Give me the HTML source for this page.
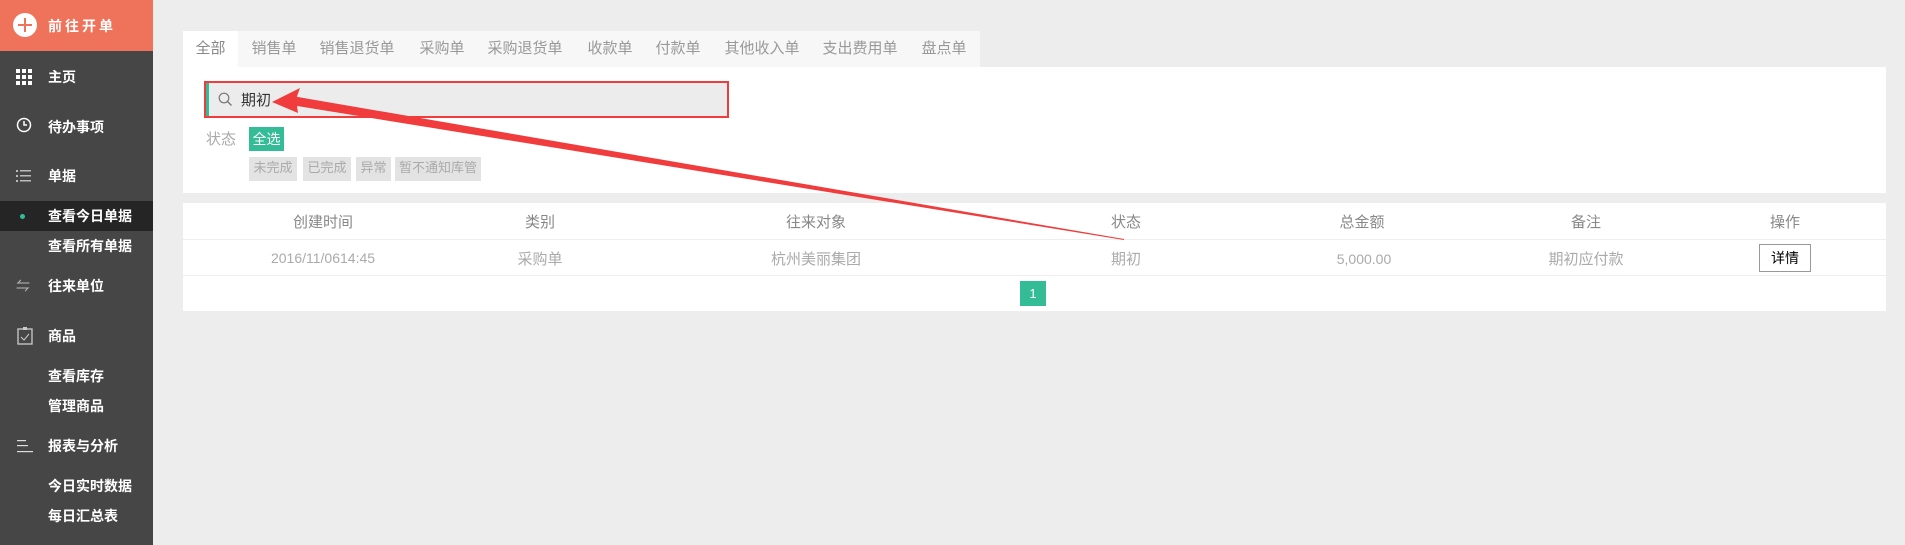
<!DOCTYPE html>
<html><head><meta charset="utf-8"><style>
*{margin:0;padding:0;box-sizing:border-box}
body{width:1905px;height:545px;background:#ededed;font-family:"Liberation Sans","Noto Sans CJK SC",sans-serif;position:relative;overflow:hidden}
.abs{position:absolute}
#side{left:0;top:0;width:153px;height:545px;background:#464646}
#top{left:0;top:0;width:153px;height:51px;background:#ef735a}
.si{position:absolute;color:#fff;font-weight:bold;font-size:14px;line-height:20px;left:48px}
.sub{left:48px}
.tab{position:absolute;top:31px;height:36px;line-height:36px;font-size:15px;color:#999;text-align:center}
.g{position:absolute;background:#e3e3e3;color:#aaa;font-size:13px;line-height:22px;text-align:center}
.th{position:absolute;top:211px;font-size:15px;color:#888;transform:translateX(-50%);white-space:nowrap}
.td{position:absolute;top:248px;font-size:15px;color:#aaa;transform:translateX(-50%);white-space:nowrap}
</style></head><body>
<div id="side" class="abs"></div>
<div id="top" class="abs"></div>
<div class="abs" style="left:13px;top:13px;width:24px;height:24px;border-radius:50%;background:#fff"></div>
<div class="abs" style="left:18px;top:24px;width:14px;height:2px;background:#ef735a"></div>
<div class="abs" style="left:24px;top:18px;width:2px;height:14px;background:#ef735a"></div>
<div class="si" style="top:16px;letter-spacing:3px">前往开单</div>
<svg class="abs" style="left:16px;top:69px" width="16" height="16"><g fill="#fff"><rect x="0" y="0" width="4" height="4"/><rect x="6" y="0" width="4" height="4"/><rect x="12" y="0" width="4" height="4"/><rect x="0" y="6" width="4" height="4"/><rect x="6" y="6" width="4" height="4"/><rect x="12" y="6" width="4" height="4"/><rect x="0" y="12" width="4" height="4"/><rect x="6" y="12" width="4" height="4"/><rect x="12" y="12" width="4" height="4"/></g></svg>
<div class="si" style="top:67px">主页</div>
<svg class="abs" style="left:16px;top:117px" width="16" height="16"><circle cx="8" cy="8" r="6.5" fill="none" stroke="#fff" stroke-width="1.5"/><path d="M8 4v4h3" fill="none" stroke="#fff" stroke-width="1.5"/></svg>
<div class="si" style="top:117px">待办事项</div>
<svg class="abs" style="left:16px;top:169px" width="16" height="14"><g fill="#bbb"><rect x="0" y="1" width="2" height="2"/><rect x="0" y="6" width="2" height="2"/><rect x="0" y="11" width="2" height="2"/><rect x="4" y="1" width="11" height="1.5"/><rect x="4" y="6" width="11" height="1.5"/><rect x="4" y="11" width="11" height="1.5"/></g></svg>
<div class="si" style="top:166px">单据</div>
<div class="abs" style="left:0;top:201px;width:153px;height:30px;background:#252525"></div>
<div class="abs" style="left:20px;top:214px;width:5px;height:5px;border-radius:50%;background:#2fbf98"></div>
<div class="si sub" style="top:206px">查看今日单据</div>
<div class="si sub" style="top:236px">查看所有单据</div>
<div class="si" style="top:276px;left:16px;color:#bbb;font-weight:normal">⇋</div>
<div class="si" style="top:276px">往来单位</div>
<svg class="abs" style="left:17px;top:327px" width="16" height="18"><rect x="1" y="2" width="14" height="15" fill="none" stroke="#ccc" stroke-width="1.3"/><rect x="6" y="0" width="4" height="3" fill="#ccc"/><path d="M4 10l3 3 5-6" fill="none" stroke="#ccc" stroke-width="1"/></svg>
<div class="si" style="top:326px">商品</div>
<div class="si sub" style="top:366px">查看库存</div>
<div class="si sub" style="top:396px">管理商品</div>
<svg class="abs" style="left:17px;top:439px" width="16" height="14"><g fill="#ddd"><rect x="0" y="1" width="9" height="1.2"/><rect x="0" y="6" width="11" height="1.2"/><rect x="0" y="12" width="16" height="1.2"/></g></svg>
<div class="si" style="top:436px">报表与分析</div>
<div class="si sub" style="top:476px">今日实时数据</div>
<div class="si sub" style="top:506px">每日汇总表</div>

<div class="abs" style="left:183px;top:31px;width:797px;height:36px;background:#f7f7f7"></div>
<div class="abs" style="left:183px;top:31px;width:55px;height:36px;background:#fff"></div>
<div class="tab" style="left:183px;width:55px;color:#888">全部</div>
<div class="tab" style="left:246px;width:56px">销售单</div>
<div class="tab" style="left:312px;width:90px">销售退货单</div>
<div class="tab" style="left:414px;width:56px">采购单</div>
<div class="tab" style="left:480px;width:90px">采购退货单</div>
<div class="tab" style="left:582px;width:56px">收款单</div>
<div class="tab" style="left:650px;width:56px">付款单</div>
<div class="tab" style="left:716px;width:92px">其他收入单</div>
<div class="tab" style="left:814px;width:92px">支出费用单</div>
<div class="tab" style="left:916px;width:56px">盘点单</div>
<div class="abs" style="left:183px;top:67px;width:1703px;height:126px;background:#fff"></div>
<div class="abs" style="left:206px;top:83px;width:521px;height:33px;background:#ececec;border-left:3px solid #2fbf98"></div>
<div class="abs" style="left:204px;top:81px;width:525px;height:37px;border:2px solid #f03c3c"></div>
<svg class="abs" style="left:218px;top:92px" width="15" height="15"><circle cx="6" cy="6" r="4.8" fill="none" stroke="#777" stroke-width="1.2"/><path d="M9.5 9.5l4 4" stroke="#777" stroke-width="1.3"/></svg>
<div class="abs" style="left:241px;top:89px;font-size:15px;color:#333">期初</div>
<div class="abs" style="left:206px;top:128px;font-size:15px;color:#aaa">状态</div>
<div class="g" style="left:249px;top:127px;width:35px;height:24px;line-height:24px;background:#34bc97;color:#fff;font-size:14px">全选</div>
<div class="g" style="left:249px;top:157px;width:48px;height:24px">未完成</div>
<div class="g" style="left:303px;top:157px;width:48px;height:24px">已完成</div>
<div class="g" style="left:356px;top:157px;width:35px;height:24px">异常</div>
<div class="g" style="left:395px;top:157px;width:86px;height:24px">暂不通知库管</div>
<div class="abs" style="left:183px;top:203px;width:1703px;height:108px;background:#fff"></div>
<div class="abs" style="left:183px;top:239px;width:1703px;height:1px;background:#eee"></div>
<div class="abs" style="left:183px;top:275px;width:1703px;height:1px;background:#eee"></div>
<div class="th" style="left:323px">创建时间</div>
<div class="th" style="left:540px">类别</div>
<div class="th" style="left:816px">往来对象</div>
<div class="th" style="left:1126px">状态</div>
<div class="th" style="left:1362px">总金额</div>
<div class="th" style="left:1586px">备注</div>
<div class="th" style="left:1785px">操作</div>
<div class="td" style="left:323px;font-size:14px;top:250px">2016/11/0614:45</div>
<div class="td" style="left:540px">采购单</div>
<div class="td" style="left:816px">杭州美丽集团</div>
<div class="td" style="left:1126px">期初</div>
<div class="td" style="left:1364px;font-size:14px;top:251px">5,000.00</div>
<div class="td" style="left:1586px">期初应付款</div>
<div class="abs" style="left:1759px;top:244px;width:52px;height:28px;border:1px solid #999;font-size:14px;line-height:26px;text-align:center;color:#000">详情</div>
<div class="abs" style="left:1020px;top:281px;width:26px;height:25px;background:#34bc97;color:#fff;font-size:13px;line-height:25px;text-align:center">1</div>
<svg class="abs" style="left:0;top:0" width="1905" height="545"><polygon points="292,96 1124,239 1124,240 291,105" fill="#f03c3c"/><polygon points="272,102 300,88 296,99 298,113" fill="#f03c3c"/></svg>
</body></html>
